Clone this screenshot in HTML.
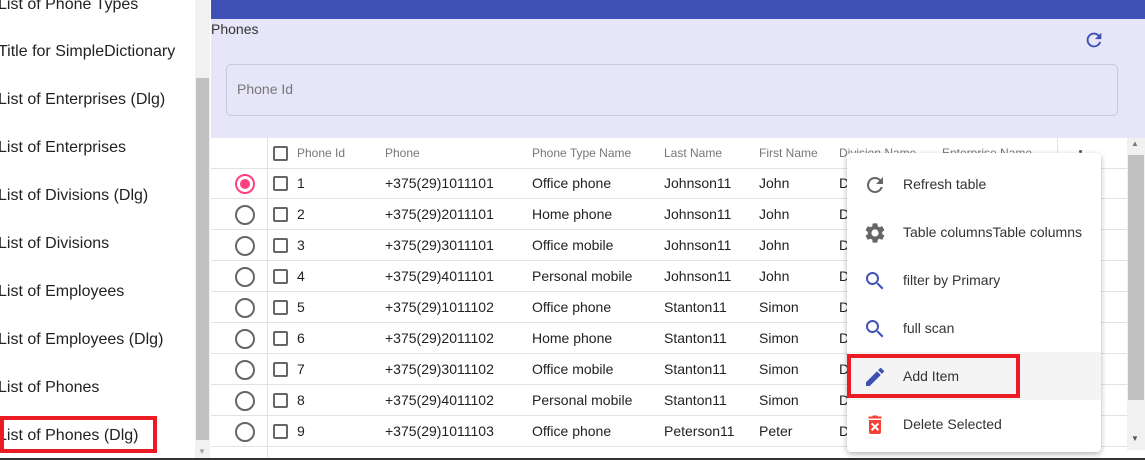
<!DOCTYPE html>
<html><head><meta charset="utf-8"><style>
*{box-sizing:border-box;margin:0;padding:0}
body{width:1145px;height:460px;overflow:hidden;position:relative;background:#fff;font-family:"Liberation Sans",Arial,sans-serif;color:#222}
.a{position:absolute}
.side{font-size:16px;color:#222;left:-2px;white-space:nowrap;line-height:20px}
.th{font-size:12px;color:#777;top:146px;white-space:nowrap}
.row{position:absolute;left:211px;width:916px;height:31px;border-bottom:1px solid #e2e2e2}
.td{position:absolute;font-size:14px;top:7px;white-space:nowrap;color:#222}
.rad{position:absolute;left:24px;top:6px;width:20px;height:20px;border:2px solid #666;border-radius:50%}
.cb{position:absolute;left:62px;top:8px;width:15px;height:15px;border:2px solid #666;border-radius:2px}
.mi{position:absolute;left:0;width:254px;height:48px;font-size:14px;color:#333}
.mi span{position:absolute;left:56px;top:16px;white-space:nowrap}
.mi svg{position:absolute;left:16px;top:13px}
</style></head><body>
<div class="a side" style="top:-5px">List of Phone Types</div>
<div class="a side" style="top:42px">Title for SimpleDictionary</div>
<div class="a side" style="top:90px">List of Enterprises (Dlg)</div>
<div class="a side" style="top:138px">List of Enterprises</div>
<div class="a side" style="top:186px">List of Divisions (Dlg)</div>
<div class="a side" style="top:234px">List of Divisions</div>
<div class="a side" style="top:282px">List of Employees</div>
<div class="a side" style="top:330px">List of Employees (Dlg)</div>
<div class="a side" style="top:378px">List of Phones</div>
<div class="a side" style="top:426px">List of Phones (Dlg)</div>
<div class="a" style="left:0;top:416px;width:157px;height:37px;border:4px solid #ec1c24"></div>
<div class="a" style="left:195px;top:0;width:15px;height:460px;background:#f1f1f1"></div>
<div class="a" style="left:196px;top:78px;width:13px;height:362px;background:#c1c1c1"></div>
<div class="a" style="left:198px;top:447px;font-size:8px;color:#a3a3a3">▼</div>
<div class="a" style="left:211px;top:0;width:934px;height:19px;background:#3f51b5"></div>
<div class="a" style="left:211px;top:19px;width:934px;height:119px;background:#e6e6f8"></div>
<div class="a" style="left:211px;top:21px;font-size:14px;color:#333">Phones</div>
<svg class="a" style="left:1083px;top:29px" width="22" height="22" viewBox="0 0 24 24"><path fill="#3f51b5" d="M17.65 6.350A7.96 7.96 0 0 0 12 4a8 8 0 1 0 7.73 10h-2.08A6 6 0 1 1 12 6c1.66 0 3.14.69 4.22 1.78L13 11h7V4l-2.350 2.350z"/></svg>
<div class="a" style="left:226px;top:64px;width:892px;height:52px;border:1px solid #c9c9dc;border-radius:5px"></div>
<div class="a" style="left:237px;top:81px;font-size:14px;color:#777">Phone Id</div>
<div class="a" style="left:267px;top:138px;width:1px;height:322px;background:#e2e2e2"></div>
<div class="a" style="left:1057px;top:138px;width:1px;height:30px;background:#e2e2e2"></div>
<div class="row" style="top:138px;height:31px"><div class="cb" style="top:8px"></div></div>
<div class="a th" style="left:297px">Phone Id</div>
<div class="a th" style="left:385px">Phone</div>
<div class="a th" style="left:532px">Phone Type Name</div>
<div class="a th" style="left:664px">Last Name</div>
<div class="a th" style="left:759px">First Name</div>
<div class="a th" style="left:839px">Division Name</div>
<div class="a th" style="left:942px">Enterprise Name</div>
<div class="a" style="left:1079px;top:150px;width:3px;height:3px;background:#555;border-radius:50%"></div>

<div class="row" style="top:168px"><div class="rad" style="border-color:#ff4081"><div style="position:absolute;left:3px;top:3px;width:10px;height:10px;border-radius:50%;background:#ff4081"></div></div><div class="cb"></div><div class="td" style="left:86px">1</div><div class="td" style="left:174px">+375(29)1011101</div><div class="td" style="left:321px">Office phone</div><div class="td" style="left:453px">Johnson11</div><div class="td" style="left:548px">John</div><div class="td" style="left:628px">D</div></div>
<div class="row" style="top:199px"><div class="rad"></div><div class="cb"></div><div class="td" style="left:86px">2</div><div class="td" style="left:174px">+375(29)2011101</div><div class="td" style="left:321px">Home phone</div><div class="td" style="left:453px">Johnson11</div><div class="td" style="left:548px">John</div><div class="td" style="left:628px">D</div></div>
<div class="row" style="top:230px"><div class="rad"></div><div class="cb"></div><div class="td" style="left:86px">3</div><div class="td" style="left:174px">+375(29)3011101</div><div class="td" style="left:321px">Office mobile</div><div class="td" style="left:453px">Johnson11</div><div class="td" style="left:548px">John</div><div class="td" style="left:628px">D</div></div>
<div class="row" style="top:261px"><div class="rad"></div><div class="cb"></div><div class="td" style="left:86px">4</div><div class="td" style="left:174px">+375(29)4011101</div><div class="td" style="left:321px">Personal mobile</div><div class="td" style="left:453px">Johnson11</div><div class="td" style="left:548px">John</div><div class="td" style="left:628px">D</div></div>
<div class="row" style="top:292px"><div class="rad"></div><div class="cb"></div><div class="td" style="left:86px">5</div><div class="td" style="left:174px">+375(29)1011102</div><div class="td" style="left:321px">Office phone</div><div class="td" style="left:453px">Stanton11</div><div class="td" style="left:548px">Simon</div><div class="td" style="left:628px">D</div></div>
<div class="row" style="top:323px"><div class="rad"></div><div class="cb"></div><div class="td" style="left:86px">6</div><div class="td" style="left:174px">+375(29)2011102</div><div class="td" style="left:321px">Home phone</div><div class="td" style="left:453px">Stanton11</div><div class="td" style="left:548px">Simon</div><div class="td" style="left:628px">D</div></div>
<div class="row" style="top:354px"><div class="rad"></div><div class="cb"></div><div class="td" style="left:86px">7</div><div class="td" style="left:174px">+375(29)3011102</div><div class="td" style="left:321px">Office mobile</div><div class="td" style="left:453px">Stanton11</div><div class="td" style="left:548px">Simon</div><div class="td" style="left:628px">D</div></div>
<div class="row" style="top:385px"><div class="rad"></div><div class="cb"></div><div class="td" style="left:86px">8</div><div class="td" style="left:174px">+375(29)4011102</div><div class="td" style="left:321px">Personal mobile</div><div class="td" style="left:453px">Stanton11</div><div class="td" style="left:548px">Simon</div><div class="td" style="left:628px">D</div></div>
<div class="row" style="top:416px"><div class="rad"></div><div class="cb"></div><div class="td" style="left:86px">9</div><div class="td" style="left:174px">+375(29)1011103</div><div class="td" style="left:321px">Office phone</div><div class="td" style="left:453px">Peterson11</div><div class="td" style="left:548px">Peter</div><div class="td" style="left:628px">D</div></div>
<div class="a" style="left:1127px;top:138px;width:18px;height:312px;background:#f1f1f1"></div>
<div class="a" style="left:1128px;top:155px;width:16px;height:245px;background:#c1c1c1"></div>
<div class="a" style="left:1131px;top:139px;font-size:8px;color:#777">▲</div>
<div class="a" style="left:1131px;top:434px;font-size:8px;color:#555">▼</div>
<div class="a" style="left:0;top:458px;width:1145px;height:2px;background:#333"></div>
<div class="a" style="left:847px;top:153px;width:254px;height:299px;background:#fff;border-radius:4px;box-shadow:0 2px 6px rgba(0,0,0,.3)">
<div class="mi" style="top:7px"><svg width="24" height="24" viewBox="0 0 24 24"><path fill="#666" d="M17.65 6.35A7.96 7.96 0 0 0 12 4a8 8 0 1 0 7.73 10h-2.08A6 6 0 1 1 12 6c1.66 0 3.14.69 4.22 1.78L13 11h7V4l-2.35 2.35z"/></svg><span>Refresh table</span></div>
<div class="mi" style="top:55px"><svg width="24" height="24" viewBox="0 0 24 24"><path fill="#666" d="M19.14 12.94c.04-.3.06-.61.06-.94 0-.32-.02-.64-.07-.94l2.030-1.580a.49.49 0 0 0 .12-.61l-1.92-3.32a.49.49 0 0 0-.59-.22l-2.39.96c-.5-.38-1.03-.7-1.62-.94l-.36-2.54a.48.48 0 0 0-.48-.41h-3.84c-.24 0-.43.17-.47.41l-.36 2.54c-.59.24-1.13.57-1.62.94l-2.39-.96a.49.49 0 0 0-.59.22L2.74 8.87c-.12.21-.08.47.12.61l2.03 1.58c-.05.3-.09.63-.09.94s.02.64.07.94l-2.03 1.58a.49.49 0 0 0-.12.61l1.92 3.32c.12.22.37.29.59.22l2.39-.96c.5.38 1.03.7 1.62.94l.36 2.54c.05.24.24.41.48.41h3.84c.24 0 .44-.17.47-.41l.36-2.54c.59-.24 1.13-.56 1.62-.94l2.39.96c.22.08.47 0 .59-.22l1.92-3.32c.12-.22.07-.47-.12-.61l-2.01-1.58zM12 15.6A3.6 3.6 0 1 1 12 8.4a3.6 3.6 0 0 1 0 7.2z"/></svg><span>Table columnsTable columns</span></div>
<div class="mi" style="top:103px"><svg width="24" height="24" viewBox="0 0 24 24"><path fill="#3f51b5" d="M15.5 14h-.79l-.28-.27A6.47 6.47 0 0 0 16 9.5 6.5 6.5 0 1 0 9.5 16c1.61 0 3.09-.59 4.23-1.57l.27.28v.79l5 4.99L20.49 19l-4.99-5zm-6 0C7.01 14 5 11.99 5 9.5S7.01 5 9.5 5 14 7.01 14 9.5 11.99 14 9.5 14z"/></svg><span>filter by Primary</span></div>
<div class="mi" style="top:151px"><svg width="24" height="24" viewBox="0 0 24 24"><path fill="#3f51b5" d="M15.5 14h-.79l-.28-.27A6.47 6.47 0 0 0 16 9.5 6.5 6.5 0 1 0 9.5 16c1.61 0 3.09-.59 4.23-1.57l.27.28v.79l5 4.99L20.49 19l-4.99-5zm-6 0C7.01 14 5 11.99 5 9.5S7.01 5 9.5 5 14 7.01 14 9.5 11.99 14 9.5 14z"/></svg><span>full scan</span></div>
<div class="mi" style="top:199px;background:#f4f4f4"><svg width="24" height="24" viewBox="0 0 24 24"><path fill="#3f51b5" d="M3 17.25V21h3.75L17.81 9.94l-3.75-3.75L3 17.25zM20.71 7.04a1 1 0 0 0 0-1.41l-2.34-2.34a1 1 0 0 0-1.41 0l-1.83 1.83 3.75 3.75 1.83-1.83z"/></svg><span>Add Item</span></div>
<div class="a" style="left:0;top:201px;width:173px;height:44px;border:4px solid #ec1c24"></div>
<div class="mi" style="top:247px"><svg width="24" height="24" viewBox="0 0 24 24"><path fill="#f44336" d="M15 3.5l-1-1h-4l-1 1H5.5v2h13v-2zM6 19a2 2 0 0 0 2 2h8a2 2 0 0 0 2-2V7H6v12zm3.3-9.3L12 12.4l2.7-2.7 1.4 1.4-2.7 2.7 2.7 2.7-1.4 1.4-2.7-2.7-2.7 2.7-1.4-1.4 2.7-2.7-2.7-2.7z"/></svg><span>Delete Selected</span></div>
</div>
</body></html>
